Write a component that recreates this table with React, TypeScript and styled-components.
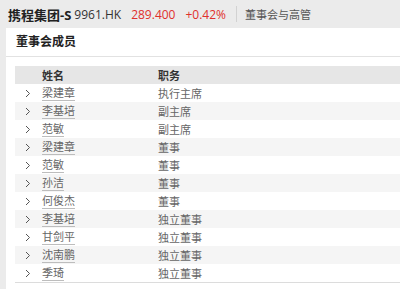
import React from "react";
import styled, { createGlobalStyle } from "styled-components";

const GlobalStyle = createGlobalStyle`
  html, body {
    margin: 0;
    padding: 0;
    background: #ebebeb;
    overflow: hidden;
  }
  body {
    font-family: "Open Sans", "Noto Sans CJK SC", sans-serif;
    color: #333;
  }
`;

const members = [
  { name: "梁建章", title: "执行主席" },
  { name: "李基培", title: "副主席" },
  { name: "范敏", title: "副主席" },
  { name: "梁建章", title: "董事" },
  { name: "范敏", title: "董事" },
  { name: "孙洁", title: "董事" },
  { name: "何俊杰", title: "董事" },
  { name: "李基培", title: "独立董事" },
  { name: "甘剑平", title: "独立董事" },
  { name: "沈南鹏", title: "独立董事" },
  { name: "季琦", title: "独立董事" },
];

const Chevron = () => (
  <svg width="6" height="9" viewBox="0 0 6 9">
    <path d="M1 1 L4.5 4.5 L1 8" fill="none" stroke="#555" strokeWidth="1" />
  </svg>
);

const App = () => {
  return (
    <Page>
      <GlobalStyle />
      <TopBar>
        <StockName>携程集团-S</StockName>
        <Code>9961.HK</Code>
        <Price>289.400</Price>
        <Price>+0.42%</Price>
        <Divider />
        <Section>董事会与高管</Section>
      </TopBar>
      <Card>
        <CardTitle>董事会成员</CardTitle>
        <Table>
          <HeadRow>
            <span />
            <span>姓名</span>
            <span>职务</span>
          </HeadRow>
          {members.map((m, i) => (
            <Row key={i} $striped={i % 2 === 1}>
              <ChevronCell>
                <Chevron />
              </ChevronCell>
              <NameCell>
                <Name>{m.name}</Name>
              </NameCell>
              <TitleCell>{m.title}</TitleCell>
            </Row>
          ))}
        </Table>
      </Card>
    </Page>
  );
};

export default App;

const Page = styled.div`
  width: 100%;
  height: 289px;
  overflow: hidden;
`;

const TopBar = styled.div`
  display: flex;
  align-items: center;
  height: 28px;
  padding-left: 8px;
  white-space: nowrap;
`;

const StockName = styled.span`
  font-size: 13px;
  font-weight: 700;
  color: #222;
  margin-right: 3px;
`;

const Code = styled.span`
  font-size: 12px;
  color: #333;
  margin-right: 10px;
`;

const Price = styled.span`
  font-size: 12px;
  color: #e0302c;
  margin-right: 10px;
`;

const Divider = styled.span`
  width: 1px;
  height: 16px;
  background: #d2d2d2;
  margin: 0 8px 0 0;
`;

const Section = styled.span`
  font-size: 11px;
  color: #555;
`;

const Card = styled.div`
  margin-left: 6px;
  background: #fff;
  height: 300px;
`;

const CardTitle = styled.div`
  height: 28px;
  line-height: 28px;
  padding-left: 10px;
  font-size: 12px;
  font-weight: 700;
  color: #222;
  border-bottom: 1px solid #e2e2e2;
`;

const Table = styled.div`
  margin: 9px 0 0 9px;
  border-bottom: 1px solid #dcdcdc;
`;

const rowGrid = `
  display: grid;
  grid-template-columns: 27px 116px 1fr;
  align-items: center;
  height: 18px;
  font-size: 11px;
`;

const HeadRow = styled.div`
  ${rowGrid}
  background: #e6e6e6;
  font-weight: 700;
  color: #333;
`;

const Row = styled.div<{ $striped: boolean }>`
  ${rowGrid}
  background: ${(p) => (p.$striped ? "#f5f5f5" : "#fff")};
  color: #666;
`;

const ChevronCell = styled.span`
  display: flex;
  align-items: center;
  padding-left: 10px;
`;

const NameCell = styled.span`
  display: flex;
  align-items: center;
`;

const Name = styled.span`
  line-height: 14px;
  border-bottom: 1px solid #bdbdbd;
  color: #666;
`;

const TitleCell = styled.span`
  color: #666;
`;
